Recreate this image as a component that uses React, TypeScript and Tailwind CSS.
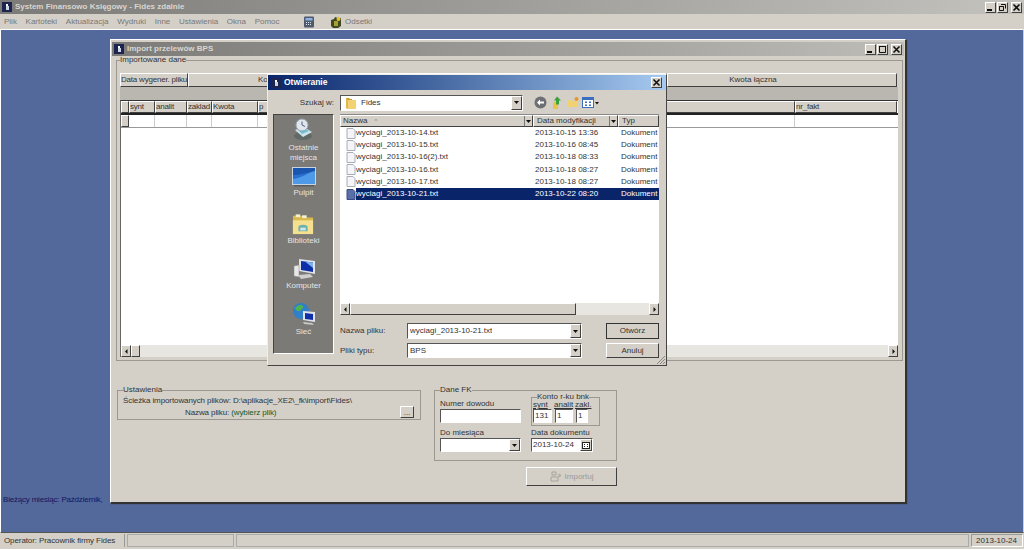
import type { ReactNode } from "react";

const raised = "border border-t-white border-l-white border-r-[#404040] border-b-[#404040] bg-[#d4d0c8]";
const sunken = "border border-t-[#555] border-l-[#555] border-r-white border-b-white bg-white";
const etched = "border border-[#9a9890]";

const AppIcon = () => (
  <svg width="10" height="10" viewBox="0 0 10 10" className="shrink-0">
    <rect width="10" height="10" fill="#1c2450" />
    <rect x="4" y="2" width="2" height="2" fill="#fff" />
    <rect x="4" y="4" width="3" height="4" fill="#cfd3e6" />
  </svg>
);

const CaptionButton = ({ kind }: { kind: "min" | "max" | "restore" | "close" }) => (
  <div className={`${raised} w-[11px] h-[11px] flex items-center justify-center`}>
    <svg width="9" height="9" viewBox="0 0 9 9">
      {kind === "min" && <rect x="1" y="6" width="5" height="2" fill="#111" />}
      {kind === "max" && <path d="M1.5 1.5h6v6h-6z M1 1.5h7" fill="none" stroke="#111" />}
      {kind === "restore" && <path d="M3 1.5h4.5v4M1.5 3.5h4v4h-4zM1.5 3.5h4" fill="none" stroke="#111" />}
      {kind === "close" && <path d="M1.5 1.5l6 6M7.5 1.5l-6 6" stroke="#111" strokeWidth="1.6" />}
    </svg>
  </div>
);

const Arrow = ({ dir }: { dir: "down" | "left" | "right" }) => (
  <svg width="5" height="5" viewBox="0 0 5 5">
    {dir === "down" && <path d="M0 1h5L2.5 4z" fill="#111" />}
    {dir === "left" && <path d="M3.5 0v5L1 2.5z" fill="#111" />}
    {dir === "right" && <path d="M1.5 0v5L4 2.5z" fill="#111" />}
  </svg>
);

const Combo = ({ children, className }: { children?: ReactNode; className: string }) => (
  <div className={`${sunken} ${className} flex items-center justify-between pl-[2px]`}>
    <span className="truncate">{children}</span>
    <div className={`${raised} w-[11px] h-full shrink-0 flex items-center justify-center`}>
      <Arrow dir="down" />
    </div>
  </div>
);

const Scroll = ({ thumb }: { thumb: string }) => (
  <div className="flex h-[12px] bg-[#e8e6e0]">
    <div className={`${raised} w-[10px] flex items-center justify-center`}>
      <Arrow dir="left" />
    </div>
    <div className={`${raised} ${thumb}`} />
    <div className="flex-1" />
    <div className={`${raised} w-[10px] flex items-center justify-center`}>
      <Arrow dir="right" />
    </div>
  </div>
);

const Group = ({ title, className, children }: { title: string; className: string; children: ReactNode }) => (
  <fieldset className={`${etched} ${className}`}>
    <legend className="leading-[8px]">{title}</legend>
    {children}
  </fieldset>
);

const FileIcon = ({ selected }: { selected?: boolean }) => (
  <svg width="10" height="11" viewBox="0 0 10 11" className="shrink-0">
    <path d="M1 .5h6l2 2v8H1z" fill={selected ? "#5a6ea8" : "#f4f5f7"} stroke={selected ? "#3c4d86" : "#a8adb8"} />
  </svg>
);

const FolderIcon = () => (
  <svg width="14" height="14" viewBox="0 0 14 14" className="shrink-0">
    <path d="M2 2h3l1 1h2v9H2z" fill="#c89b2e" />
    <path d="M4 4h8v9H4l-2-1z" fill="#f3d273" />
    <path d="M2 2v10l2 1V4z" fill="#e0b84c" />
  </svg>
);

const RecentIcon = () => (
  <svg width="24" height="24" viewBox="0 0 24 24">
    <ellipse cx="12" cy="18" rx="9" ry="4" fill="#5f6a66" />
    <path d="M4 12l9-3 8 5-9 5z" fill="#cfe4ea" />
    <path d="M7 12l7-2 4 3-7 3z" fill="#6fc0d0" />
    <circle cx="11" cy="7" r="6" fill="#dfe6ee" stroke="#9aa5b4" />
    <path d="M11 3.5V7l3 1.5" fill="none" stroke="#51637f" />
  </svg>
);

const DesktopIcon = () => (
  <svg width="24" height="20" viewBox="0 0 24 20">
    <rect x=".5" y=".5" width="23" height="17" fill="#2a6fd0" stroke="#c9d4e2" />
    <path d="M1 12c8-1 14-5 22-9v14H1z" fill="#4f9ae8" />
    <path d="M1 1h22v3C15 6 7 8 1 8z" fill="#1a56b0" />
    <rect x="2" y="18" width="20" height="1.5" fill="#5c5a58" />
  </svg>
);

const LibraryIcon = () => (
  <svg width="24" height="22" viewBox="0 0 24 24">
    <path d="M1 3h9l2 2h11v18H1z" fill="#d8b94e" />
    <rect x="4" y="1.5" width="5" height="3" fill="#f5f0d0" />
    <rect x="11" y="2.5" width="5" height="3" fill="#f5f0d0" />
    <path d="M1 8h22v15H1z" fill="#f4e08f" />
    <path d="M7 15c0-3 10-3 10 0v5H7z" fill="#6fb0b0" />
    <rect x="9" y="16" width="6" height="3" fill="#cfe6e4" />
  </svg>
);

const ComputerIcon = () => (
  <svg width="24" height="22" viewBox="0 0 24 22">
    <path d="M7 1l16 2v13L7 13z" fill="#dfe3ea" />
    <path d="M9 3l12 1.5V14L9 12z" fill="#0f2fa8" />
    <path d="M13 3.5l8 1V10z" fill="#7fb0ee" />
    <path d="M2 8l5-1v12l-5-1z" fill="#e8e8e8" stroke="#8a8a8a" strokeWidth=".5" />
    <path d="M6 17l12-1 3 3-12 2z" fill="#cfcfcf" />
  </svg>
);

const NetworkIcon = () => (
  <svg width="24" height="24" viewBox="0 0 24 24">
    <circle cx="9" cy="9" r="8" fill="#2f80c8" />
    <path d="M3 6c3-3 6-4 8-2 1 2-2 3-3 5-2 0-3 1-5-3zM11 13c2-1 4 0 3 2s-3 2-3-2z" fill="#4fb24c" />
    <path d="M11 9l12 1v10l-12-2z" fill="#dfe3ea" />
    <path d="M13 11l8 1v6l-8-1z" fill="#0f2fa8" />
    <path d="M11 20l9 1 2 2-10-1z" fill="#c8c8c8" />
  </svg>
);

const places: { icon: ReactNode; label: string[]; h: string }[] = [
  { icon: <RecentIcon />, label: ["Ostatnie", "miejsca"], h: "h-[49px]" },
  { icon: <DesktopIcon />, label: ["Pulpit"], h: "h-[46px]" },
  { icon: <LibraryIcon />, label: ["Biblioteki"], h: "h-[45px]" },
  { icon: <ComputerIcon />, label: ["Komputer"], h: "h-[44px]" },
  { icon: <NetworkIcon />, label: ["Sieć"], h: "h-[44px]" },
];

const files = [
  ["wyciagi_2013-10-14.txt", "2013-10-15 13:36"],
  ["wyciagi_2013-10-15.txt", "2013-10-16 08:45"],
  ["wyciagi_2013-10-16(2).txt", "2013-10-18 08:33"],
  ["wyciagi_2013-10-16.txt", "2013-10-18 08:27"],
  ["wyciagi_2013-10-17.txt", "2013-10-18 08:27"],
  ["wyciagi_2013-10-21.txt", "2013-10-22 08:20"],
];

const FileDialog = () => (
  <div className="absolute left-[266px] top-[44px] w-[400px] h-[292px] flex flex-col border border-[#444] border-t-[#eee] border-l-[#eee] bg-[#d4d0c8] z-20">
    <div className="h-[15px] flex items-center pl-[3px] pr-[4px] bg-gradient-to-r from-[#0a246a] to-[#a6caf0] text-white font-bold text-[8.5px]">
      <AppIcon />
      <span className="ml-[3px] flex-1">Otwieranie</span>
      <CaptionButton kind="close" />
    </div>

    <div className="flex items-center h-[17px] mt-[4px]">
      <span className="w-[66px] text-right">Szukaj w:</span>
      <div className={`${sunken} ml-[6px] w-[183px] h-[16px] flex items-center justify-between pl-[3px]`}>
        <span className="flex items-center gap-[3px]">
          <FolderIcon />
          Fides
        </span>
        <div className={`${raised} w-[11px] h-full flex items-center justify-center`}>
          <Arrow dir="down" />
        </div>
      </div>
      <div className="flex items-center gap-[3px] ml-[11px]">
        <svg width="13" height="13" viewBox="0 0 13 13">
          <circle cx="6.5" cy="6.5" r="6" fill="#6d6f73" />
          <path d="M3 6.5l3-3v2h4v2H6v2z" fill="#fff" />
        </svg>
        <svg width="13" height="13" viewBox="0 0 13 13">
          <path d="M3 6h5v7H3z" fill="#e7c64a" />
          <path d="M7 .5l4 4H9v4H6v-4H4z" fill="#3ba13b" />
        </svg>
        <svg width="13" height="13" viewBox="0 0 13 13">
          <path d="M1 4h4l1 1h5v6H1z" fill="#f0d272" />
          <circle cx="10.5" cy="3" r="2" fill="#e8952c" />
        </svg>
        <svg width="17" height="13" viewBox="0 0 17 13">
          <rect x=".5" y="1.5" width="11" height="10" fill="#fff" stroke="#3c6fc0" />
          <path d="M1 2h10v2H1z" fill="#3c6fc0" />
          <path d="M3 5.5h2v1.5H3zM7 5.5h2v1.5H7zM3 8.5h2V10H3zM7 8.5h2V10H7z" fill="#3c6fc0" />
          <path d="M13 6h4l-2 2.5z" fill="#111" />
        </svg>
      </div>
    </div>

    <div className="flex ml-[5px] mt-[3px] h-[240px]">
      <div className="w-[61px] bg-[#7b7a76] border border-t-[#444] border-l-[#444] border-r-white border-b-white flex flex-col items-center pt-[3px] text-[#e4e4e4] leading-[10px]">
        {places.map((p) => (
          <div key={p.label[0]} className={`${p.h} flex flex-col items-center`}>
            {p.icon}
            <div className="mt-[1px] flex flex-col items-center">
              {p.label.map((l) => (
                <span key={l}>{l}</span>
              ))}
            </div>
          </div>
        ))}
      </div>

      <div className="flex flex-col ml-[6px] w-[319px]">
        <div className="flex h-[13px] border-t border-t-[#888]">
          <div className={`${raised} w-[193px] flex items-center pl-[2px] justify-between`}>
            <span className="flex items-center gap-[7px]">
              Nazwa <span className="text-[#777] text-[6px]">^</span>
            </span>
            <div className="w-[8px] h-full border-l border-[#777] flex items-center justify-center">
              <Arrow dir="down" />
            </div>
          </div>
          <div className={`${raised} w-[85px] flex items-center pl-[3px] justify-between`}>
            Data modyfikacji
            <div className="w-[8px] h-full border-l border-[#777] flex items-center justify-center">
              <Arrow dir="down" />
            </div>
          </div>
          <div className={`${raised} flex-1 flex items-center pl-[3px]`}>Typ</div>
        </div>
        <div className="h-[176px] bg-white flex flex-col overflow-hidden">
          {files.map(([name, date], i) => {
            const sel = i === files.length - 1;
            return (
              <div key={name} className="h-[12.2px] shrink-0 flex items-center pl-[6px]">
                <FileIcon selected={sel} />
                <div className={`flex flex-1 h-full items-center ${sel ? "bg-[#0a246a] text-white" : ""}`}>
                  <span className="w-[179px]">{name}</span>
                  <span className="w-[86px]">{date}</span>
                  <span className="flex-1 overflow-hidden whitespace-nowrap">Dokument t</span>
                </div>
              </div>
            );
          })}
        </div>
        <Scroll thumb="w-[226px]" />
      </div>
    </div>

    <div className="absolute left-[72px] top-[248px] w-[320px] h-[37px] grid grid-cols-[67px_175px_1fr] grid-rows-[16px_15px] gap-y-[4px]">
      <span className="self-center">Nazwa pliku:</span>
      <Combo className="h-full">wyciagi_2013-10-21.txt</Combo>
      <button className={`${raised} ml-[24px] w-[53px] h-full outline outline-1 outline-[#333] outline-offset-[-1px] text-center`}>
        Otwórz
      </button>
      <span className="self-center">Pliki typu:</span>
      <Combo className="h-full">BPS</Combo>
      <button className={`${raised} ml-[24px] w-[53px] h-full text-center`}>Anuluj</button>
    </div>

    <svg width="10" height="10" viewBox="0 0 10 10" className="absolute right-0 bottom-0">
      <path d="M9 1L1 9M9 4L4 9M9 7L7 9" stroke="#8a8880" />
    </svg>
  </div>
);

const Cell = ({ w, children }: { w: string; children?: ReactNode }) => (
  <div className={`${raised} ${w} shrink-0 flex items-center tracking-[-0.2px] whitespace-nowrap overflow-hidden`}>{children}</div>
);

const ImportWindow = () => (
  <div className="absolute left-[109px] top-[9px] w-[796px] h-[464px] flex flex-col border border-t-white border-l-white border-r-[#333] border-b-[#333] bg-[#d4d0c8] z-10 shadow-[1px_1px_1px_#333]">
    <div className="h-[14px] mt-[2px] mx-[1px] flex items-center pl-[2px] pr-[2px] gap-[1px] bg-gradient-to-r from-[#7c7b78] to-[#bdbcb7] text-[#d8d6d0] font-bold text-[8px]">
      <AppIcon />
      <span className="ml-[2px] flex-1">Import przelewów BPS</span>
      <CaptionButton kind="min" />
      <CaptionButton kind="max" />
      <div className="w-[1px]" />
      <CaptionButton kind="close" />
    </div>

    <Group title="Importowane dane" className="ml-[5px] w-[787px] h-[305px] px-[3px]">
      <div className="flex h-[14px] mt-[9px] w-[778px]">
        <Cell w="w-[68px]">Data wygener. pliku</Cell>
        <Cell w="w-[479px] pl-[69px]">Ko</Cell>
        <div className={`${raised} w-[230px] text-center leading-[12px] pr-[58px]`}>Kwota łączna</div>
      </div>
      <div className="h-[13px] w-[778px] bg-[#bab7b0]" />
      <div className="w-[778px] h-[257px] flex flex-col border-t border-t-[#333] border-l border-l-[#666] bg-white">
        <div className="flex h-[14px] border-b-2 border-b-[#222]">
          <Cell w="w-[8px]" />
          <Cell w="w-[26px]">synt</Cell>
          <Cell w="w-[32px]">analit</Cell>
          <Cell w="w-[25px]">zaklad</Cell>
          <Cell w="w-[46px]">Kwota</Cell>
          <Cell w="w-[537px]">p</Cell>
          <Cell w="w-[102px]">nr_fakt</Cell>
        </div>
        <div className="flex h-[13px] border-b border-b-[#999]">
          <div className={`${raised} w-[8px] shrink-0`} />
          <div className="w-[26px] border-r border-[#ccc] shrink-0" />
          <div className="w-[32px] border-r border-[#ccc] shrink-0" />
          <div className="w-[25px] border-r border-[#ccc] shrink-0" />
          <div className="w-[46px] border-r border-[#ccc] shrink-0" />
          <div className="w-[537px] border-r border-[#ccc] shrink-0" />
        </div>
        <div className="flex-1" />
        <Scroll thumb="w-[9px]" />
      </div>
    </Group>

    <div className="flex mt-[25px] ml-[6px] items-start">
      <Group title="Ustawienia" className="w-[304px] h-[34px] px-[5px] flex flex-col">
        <div className="leading-[12px] mt-[1px] tracking-[-0.1px]">Ścieżka importowanych plików: D:\aplikacje_XE2\_fk\import\Fides\</div>
        <div className="flex items-center leading-[12px] tracking-[-0.1px]">
          <span className="w-[62px]" />
          <span>Nazwa pliku:</span>
          <span className="ml-[2px] text-[#0f5a2a]">(wybierz plik)</span>
          <div className={`${raised} ml-auto mr-[1px] w-[14px] h-[12px] -mt-[2px] flex items-end justify-center leading-[8px]`}>...</div>
        </div>
      </Group>

      <div className="flex flex-col items-end ml-[13px] w-[183px]">
        <Group title="Dane FK" className="w-[183px] h-[75px] px-[5px] flex gap-[11px]">
          <div className="flex flex-col w-[81px] leading-[10px]">
            <span className="mt-[5px]">Numer dowodu</span>
            <div className={`${sunken} h-[14px] w-[81px] border-[#333]`} />
            <span className="mt-[5px]">Do miesiąca</span>
            <Combo className="h-[14px] w-[81px]" />
          </div>
          <div className="flex flex-col w-[70px] leading-[10px]">
            <fieldset className={`${etched} w-[69px] h-[33px] -mt-[1px] -ml-[1px] px-[1px]`}>
              <legend className="ml-[4px] leading-[8px]">Konto r-ku bnk</legend>
              <div className="flex leading-[8px] gap-[3px]">
                <span className="w-[18px] underline">synt</span>
                <span className="w-[18px] underline">analit</span>
                <span className="underline">zakl.</span>
              </div>
              <div className="flex gap-[3px]">
                <div className={`${sunken} w-[19px] h-[14px] border-[#333] pl-[1px] leading-[12px]`}>131</div>
                <div className={`${sunken} w-[18px] h-[14px] border-[#333] pl-[1px] leading-[12px]`}>1</div>
                <div className={`${sunken} w-[12px] h-[14px] border-[#333] pl-[1px] leading-[12px]`}>1</div>
              </div>
            </fieldset>
            <span className="mt-[2px] -ml-[1px]">Data dokumentu</span>
            <div className={`${sunken} -ml-[1px] w-[62px] h-[14px] flex items-center justify-between pl-[1px]`}>
              2013-10-24
              <div className={`${raised} w-[12px] h-full flex items-center justify-center`}>
                <svg width="8" height="7" viewBox="0 0 8 7">
                  <rect x=".5" y=".5" width="7" height="6" fill="#fff" stroke="#222" />
                  <path d="M2 2.5h1M5 2.5h1M2 4.5h1M5 4.5h1" stroke="#222" />
                </svg>
              </div>
            </div>
          </div>
        </Group>
        <div className={`${raised} mt-[6px] w-[91px] h-[19px] flex items-center justify-center gap-[3px] text-[#999] border-r-[#666] border-b-[#666]`}>
          <svg width="12" height="11" viewBox="0 0 12 11">
            <path d="M2 1h4v3H2zM1 6h7v4H1zM9 3v3l2-1.5z" fill="none" stroke="#a5a39c" />
          </svg>
          Importuj
        </div>
      </div>
    </div>
  </div>
);

const App = () => (
  <div className="w-[1024px] h-[550px] overflow-hidden flex flex-col bg-[#d4d0c8] font-['Liberation_Sans',Arial,sans-serif] text-[8px] text-[#333]">
    <div className="h-[14px] shrink-0 flex items-center pl-[2px] pr-[2px] gap-[1px] bg-gradient-to-r from-[#7c7b78] to-[#c3c2bd] text-[#d8d6d0] font-bold text-[8px]">
      <AppIcon />
      <span className="ml-[2px] flex-1">System Finansowo Księgowy - Fides zdalnie</span>
      <CaptionButton kind="min" />
      <CaptionButton kind="restore" />
      <div className="w-[1px]" />
      <CaptionButton kind="close" />
    </div>

    <div className="h-[15px] shrink-0 flex items-center text-[#777]">
      <div className="flex items-center gap-[8.7px] pl-[4px] w-[303px]">
        <span>Plik</span>
        <span>Kartoteki</span>
        <span>Aktualizacja</span>
        <span>Wydruki</span>
        <span>Inne</span>
        <span>Ustawienia</span>
        <span>Okna</span>
        <span>Pomoc</span>
      </div>
      <svg width="12" height="12" viewBox="0 0 12 12">
        <rect x="1" y=".5" width="10" height="11" rx="1" fill="#4e5a6e" />
        <rect x="2.5" y="2" width="7" height="2.5" fill="#8fb0e0" />
        <path d="M3 6.5h6M3 8.5h6" stroke="#dfe3ea" strokeDasharray="1 1" />
      </svg>
      <svg width="12" height="12" viewBox="0 0 12 12" className="ml-[15px]">
        <path d="M1 4l3-1 1-2 3 1h3v8l-3 2H3l-2-2z" fill="#3f4a22" />
        <circle cx="8.5" cy="3" r="2" fill="#e0c23a" />
        <path d="M4 5h4v5H4z" fill="#a8a030" />
      </svg>
      <span className="ml-[3px]">Odsetki</span>
    </div>

    <div className="relative flex-1 bg-[#53699b] border-t border-t-white border-l border-l-white border-b border-b-[#555] border-r border-r-[#d4d0c8]">
      <span className="absolute left-[2px] bottom-[26px] text-[#14145e] tracking-[-0.2px] whitespace-nowrap">
        Bieżący miesiąc: Październik, &nbsp;&nbsp;&nbsp;Typ pracy: gg
      </span>
      <ImportWindow />
      <FileDialog />
    </div>

    <div className="h-[17px] shrink-0 flex items-stretch gap-[2px] px-[1px] pt-[1px] pb-[2px] border-b border-b-white">
      <div className="w-[124px] pl-[3px] flex items-center border-r border-r-[#999] tracking-[-0.1px]">Operator: Pracownik firmy Fides</div>
      <div className="w-[107px] border border-[#aaa]" />
      <div className="flex-1 border border-[#aaa]" />
      <div className="w-[52px] border border-[#999] border-r-white border-b-white flex items-center justify-end pr-[5px]">2013-10-24</div>
    </div>
  </div>
);

export default App;
